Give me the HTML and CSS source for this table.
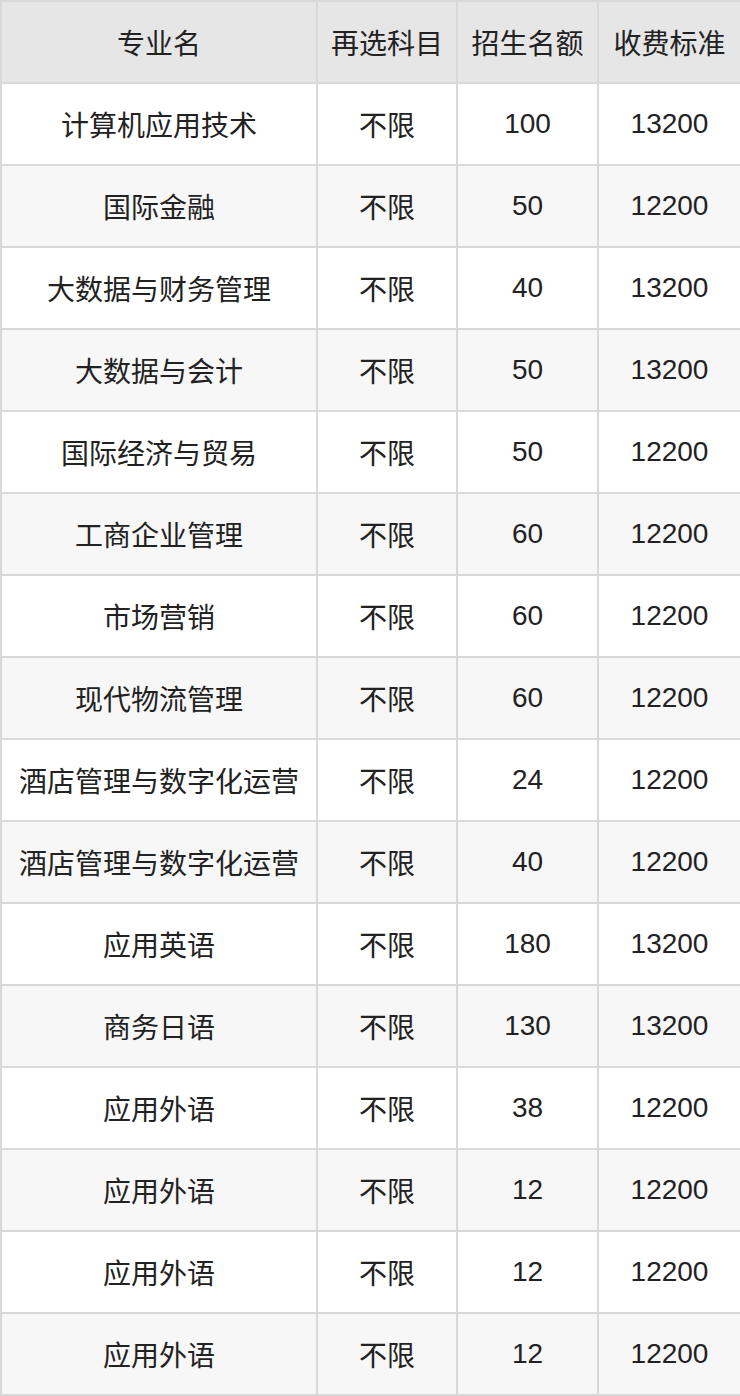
FILE: index.html
```html
<!DOCTYPE html>
<html lang="zh">
<head>
<meta charset="utf-8">
<link rel="stylesheet" href="styles.css">
</head>
<body>
<table class="tbl">
  <colgroup>
    <col class="c1"><col class="c2"><col class="c3"><col class="c4">
  </colgroup>
  <thead>
    <tr><th>专业名</th><th>再选科目</th><th>招生名额</th><th>收费标准</th></tr>
  </thead>
  <tbody>
    <tr><td>计算机应用技术</td><td>不限</td><td>100</td><td>13200</td></tr>
    <tr><td>国际金融</td><td>不限</td><td>50</td><td>12200</td></tr>
    <tr><td>大数据与财务管理</td><td>不限</td><td>40</td><td>13200</td></tr>
    <tr><td>大数据与会计</td><td>不限</td><td>50</td><td>13200</td></tr>
    <tr><td>国际经济与贸易</td><td>不限</td><td>50</td><td>12200</td></tr>
    <tr><td>工商企业管理</td><td>不限</td><td>60</td><td>12200</td></tr>
    <tr><td>市场营销</td><td>不限</td><td>60</td><td>12200</td></tr>
    <tr><td>现代物流管理</td><td>不限</td><td>60</td><td>12200</td></tr>
    <tr><td>酒店管理与数字化运营</td><td>不限</td><td>24</td><td>12200</td></tr>
    <tr><td>酒店管理与数字化运营</td><td>不限</td><td>40</td><td>12200</td></tr>
    <tr><td>应用英语</td><td>不限</td><td>180</td><td>13200</td></tr>
    <tr><td>商务日语</td><td>不限</td><td>130</td><td>13200</td></tr>
    <tr><td>应用外语</td><td>不限</td><td>38</td><td>12200</td></tr>
    <tr><td>应用外语</td><td>不限</td><td>12</td><td>12200</td></tr>
    <tr><td>应用外语</td><td>不限</td><td>12</td><td>12200</td></tr>
    <tr><td>应用外语</td><td>不限</td><td>12</td><td>12200</td></tr>
  </tbody>
</table>
</body>
</html>
```
FILE: styles.css
```css
html, body {
  margin: 0;
  padding: 0;
  background: #ffffff;
}
.tbl {
  border-collapse: collapse;
  table-layout: fixed;
  width: 740px;
  font-family: "Liberation Sans", "Noto Sans CJK SC", sans-serif;
  font-size: 28px;
  color: #222222;
}
.c1 { width: 316px; }
.c2 { width: 140px; }
.c3 { width: 141px; }
.c4 { width: 143px; }
.tbl th, .tbl td {
  border: 2px solid #d9d9d9;
  height: 82px;
  padding: 0;
  text-align: center;
  vertical-align: middle;
  font-weight: normal;
  box-sizing: border-box;
}
.tbl th {
  background: #e6e6e6;
}
.tbl tbody tr:nth-child(even) td {
  background: #f7f7f7;
}
.tbl tbody tr:nth-child(odd) td {
  background: #ffffff;
}
```
